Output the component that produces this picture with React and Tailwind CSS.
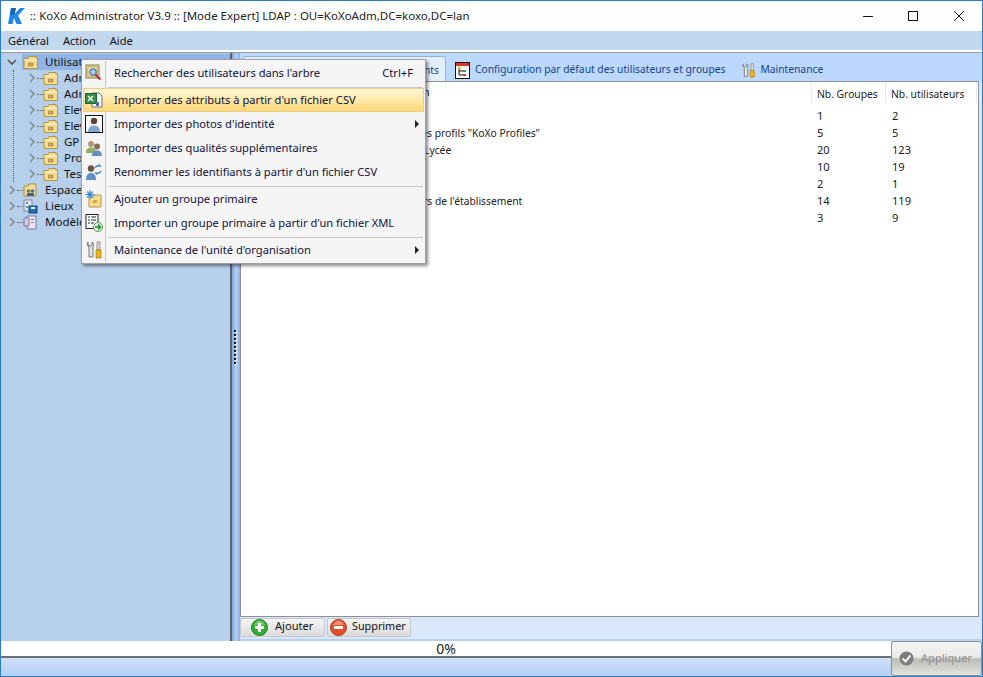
import React from "react";

const FONT = "font-['Noto_Sans',sans-serif]";

function Logo() {
  return (
    <svg width="17" height="18" viewBox="0 0 17 18" className="shrink-0">
      <path d="M3 1h5L6.5 7 12 1h5l-7 7.5L14 17H8.5L6 11l-1.5 6H0z" fill="#1e8ae6" />
      <path d="M3 1h5L6.5 7 5 8H2z" fill="#1566b8" />
    </svg>
  );
}

function Chevron({ open }) {
  return open ? (
    <svg width="10" height="10" viewBox="0 0 10 10" className="shrink-0">
      <path d="M1 3l4 4 4-4" fill="none" stroke="#555" strokeWidth="1.6" />
    </svg>
  ) : (
    <svg width="10" height="10" viewBox="0 0 10 10" className="shrink-0">
      <path d="M3 1l4 4-4 4" fill="none" stroke="#8a8f96" strokeWidth="1.6" />
    </svg>
  );
}

function Folder() {
  return (
    <svg width="15" height="15" viewBox="0 0 15 15" className="shrink-0">
      <path d="M1 3.500h4l1-2h7v1.500h1.500v10.500H1z" fill="#f7dc8f" stroke="#b39545" strokeWidth="1" />
      <rect x="1.500" y="4.500" width="12.500" height="1" fill="#fff4c8" />
      <rect x="5.500" y="8" width="4.500" height="3" fill="#c9a94a" stroke="#8f7a36" strokeWidth="0.500" />
    </svg>
  );
}

function TreeIcon({ kind }) {
  if (kind === "space")
    return (
      <svg width="15" height="15" viewBox="0 0 15 15" className="shrink-0">
        <path d="M1 3h4l1-2h7v12H1z" fill="#f3dc98" stroke="#a89048" />
        <circle cx="5.500" cy="8" r="1.800" fill="#5f8f3e" />
        <circle cx="9.500" cy="8" r="1.800" fill="#3a6ea8" />
        <rect x="4" y="10" width="7" height="3" fill="#47608a" />
      </svg>
    );
  if (kind === "place")
    return (
      <svg width="15" height="15" viewBox="0 0 15 15" className="shrink-0">
        <rect x="1" y="1" width="8" height="11" fill="#dfe6f0" stroke="#7a8aa5" />
        <rect x="3" y="3" width="2" height="2" fill="#6c83ad" />
        <rect x="3" y="7" width="2" height="2" fill="#6c83ad" />
        <rect x="6" y="7" width="8" height="7" fill="#1f6fb5" stroke="#124a80" />
        <rect x="8" y="8" width="4" height="2" fill="#e8f0fa" />
      </svg>
    );
  return (
    <svg width="15" height="15" viewBox="0 0 15 15" className="shrink-0">
      <path d="M4 1h9v13H4z" fill="#e9e3f2" stroke="#8276a3" />
      <path d="M1 3h5v8H1z" fill="#d3c9e6" stroke="#8276a3" />
      <rect x="8" y="4" width="3" height="1" fill="#8276a3" />
      <rect x="8" y="7" width="3" height="1" fill="#8276a3" />
    </svg>
  );
}

const CHILDREN = ["Administratifs", "Admins", "Eleves", "Eleves2", "GP", "Profs", "Tests"];
const ROOTS = [
  { label: "Espaces", icon: "space" },
  { label: "Lieux", icon: "place" },
  { label: "Modèles", icon: "model" },
];

function TreeRow({ label, icon }) {
  return (
    <div className="flex h-4 items-center">
      <Chevron />
      <span className="w-[6px] border-t border-dotted border-[#666]" />
      {icon ? <TreeIcon kind={icon} /> : <Folder />}
      <span className={`whitespace-nowrap leading-4 ${icon ? "pl-[7px]" : "pl-[6px]"}`}>{label}</span>
    </div>
  );
}

function SearchIcon() {
  return (
    <svg width="18" height="18" viewBox="0 0 18 18">
      <rect x="1" y="1" width="13" height="13" fill="#e8d9a0" stroke="#8d7d45" />
      <rect x="3" y="3" width="9" height="9" fill="#f8f2d8" stroke="#b6a665" />
      <circle cx="8" cy="8" r="3.200" fill="#a9cdf0" stroke="#4d6f99" strokeWidth="1.200" />
      <path d="M10.500 10.500l5 5" stroke="#b0344a" strokeWidth="2.200" />
    </svg>
  );
}

function ExcelIcon() {
  return (
    <svg width="18" height="18" viewBox="0 0 18 18">
      <path d="M7 2h7l3 3v11H7z" fill="#fff" stroke="#5b6b7d" />
      <rect x="0.500" y="2.500" width="11" height="10" fill="#2f8f46" stroke="#1d6630" />
      <path d="M3 5l5 5M8 5l-5 5" stroke="#fff" strokeWidth="1.400" />
      <rect x="11" y="11" width="3" height="4" fill="#4b6ea8" />
    </svg>
  );
}

function PhotoIcon() {
  return (
    <svg width="18" height="18" viewBox="0 0 18 18">
      <rect x="0.500" y="0.500" width="17" height="17" fill="#fff" stroke="#111" />
      <circle cx="9" cy="6" r="3.200" fill="#5b4636" />
      <path d="M3 17c0-5 3-6.500 6-6.500s6 1.500 6 6.500z" fill="#7ea6d0" />
    </svg>
  );
}

function UsersIcon() {
  return (
    <svg width="18" height="18" viewBox="0 0 18 18">
      <circle cx="6" cy="5" r="3" fill="#b89870" />
      <path d="M1 14c0-4 2-5.500 5-5.500s5 1.500 5 5.500z" fill="#8bb05e" />
      <circle cx="12" cy="7.500" r="3" fill="#8d6c4c" />
      <path d="M7 17c0-4 2-5.500 5-5.500s5 1.500 5 5.500z" fill="#5f8fc4" />
    </svg>
  );
}

function RenameIcon() {
  return (
    <svg width="18" height="18" viewBox="0 0 18 18">
      <circle cx="6" cy="5.500" r="3.200" fill="#6d543e" />
      <path d="M1 17c0-5 2-7 5-7s5 2 5 7z" fill="#5f8fc4" />
      <path d="M10 5c1-2 3-2.500 5-2l-1-1.500M16 8c-1 2-3 2.500-5 2l1 1.500" fill="none" stroke="#3f86cf" strokeWidth="1.500" />
    </svg>
  );
}

function AddGroupIcon() {
  return (
    <svg width="18" height="18" viewBox="0 0 18 18">
      <path d="M4 7h4l1-2h7v12H4z" fill="#f7dc8f" stroke="#b39545" />
      <rect x="8" y="10" width="4" height="3" fill="#c9a94a" />
      <path d="M5 0v9M0.500 4.500h9M2 1.500l6 6M8 1.500l-6 6" stroke="#2f86e0" strokeWidth="1.100" />
    </svg>
  );
}

function ImportIcon() {
  return (
    <svg width="18" height="18" viewBox="0 0 18 18">
      <rect x="1" y="0.500" width="12" height="14" fill="#fff" stroke="#222" />
      <path d="M3 3h2M6 3h5M3 6h2M6 6h5M3 9h2M6 9h3" stroke="#222" strokeWidth="1" />
      <circle cx="13" cy="13" r="4.500" fill="#e9f6e6" stroke="#4c9a45" />
      <path d="M10 13h5M13 10.500l2.500 2.500-2.500 2.500" fill="none" stroke="#1d8a2e" strokeWidth="1.500" />
    </svg>
  );
}

function ToolsIcon({ size = 18 }) {
  return (
    <svg width={size} height={size} viewBox="0 0 18 18" className="shrink-0">
      <path d="M3 1v3l2 1 2-1V1c1.500 1 2 3 1 5v10H4V6C2 5 2 2 3 1z" fill="#e4e4e4" stroke="#777" />
      <rect x="12" y="1" width="3" height="8" fill="#d8d8d8" stroke="#777" strokeWidth="0.700" />
      <path d="M11 9h5v8h-5z" fill="#efb21e" stroke="#a87a10" strokeWidth="0.700" />
    </svg>
  );
}

function TreeTabIcon() {
  return (
    <svg width="16" height="17" viewBox="0 0 16 17" className="shrink-0">
      <rect x="0.500" y="0.500" width="14" height="16" fill="#fff" stroke="#111" />
      <rect x="1" y="1" width="13" height="3" fill="#d9362c" />
      <path d="M4 5v8h5M4 9h5" fill="none" stroke="#111" />
      <rect x="3" y="5" width="3" height="2" fill="#e8c13a" />
      <rect x="8" y="8" width="3" height="2" fill="#3aa04a" />
      <rect x="8" y="12" width="3" height="2" fill="#d9362c" />
    </svg>
  );
}

function RoundIcon({ color, edge, plus }) {
  return (
    <svg width="17" height="17" viewBox="0 0 17 17" className="shrink-0">
      <circle cx="8.500" cy="8.500" r="8" fill={color} stroke={edge} />
      <path d="M3 6c1-3 4-4.500 5.500-4.500S13 3 14 6z" fill="#fff" opacity="0.350" />
      {plus ? (
        <path d="M8.500 4v9M4 8.500h9" stroke="#fff" strokeWidth="3" />
      ) : (
        <path d="M4 8.500h9" stroke="#fff" strokeWidth="3" />
      )}
    </svg>
  );
}

const MENU = [
  { label: "Rechercher des utilisateurs dans l'arbre", icon: <SearchIcon />, shortcut: "Ctrl+F" },
  { sep: true },
  { label: "Importer des attributs à partir d'un fichier CSV", icon: <ExcelIcon />, active: true },
  { label: "Importer des photos d'identité", icon: <PhotoIcon />, arrow: true },
  { label: "Importer des qualités supplémentaires", icon: <UsersIcon /> },
  { label: "Renommer les identifiants à partir d'un fichier CSV", icon: <RenameIcon /> },
  { sep: true },
  { label: "Ajouter un groupe primaire", icon: <AddGroupIcon /> },
  { label: "Importer un groupe primaire à partir d'un fichier XML", icon: <ImportIcon /> },
  { sep: true },
  { label: "Maintenance de l'unité d'organisation", icon: <ToolsIcon />, arrow: true },
];

function ContextMenu() {
  return (
    <div className="absolute left-[80px] top-[58px] w-[345px] border border-[#a0a0a0] bg-[#f5f5f5] py-[1px] text-[11.150px] shadow-[2px_2px_3px_rgba(0,0,0,0.45)]">
      <div className="absolute bottom-[1px] left-[23px] top-[1px] w-[1px] bg-[#c5c5c5]" />
      {MENU.map((item, i) =>
        item.sep ? (
          <div key={i} className="ml-[26px] mr-[2px] h-[3px] border-b border-[#c5c5c5]" />
        ) : (
          <div
            key={i}
            className={`relative flex h-6 items-center ${
              item.active
                ? "mx-[1px] border border-[#e8d08c] bg-gradient-to-b from-[#fff6d8] via-[#ffe9a8] to-[#ffd777]"
                : ""
            }`}
          >
            <span className={`flex w-[24px] shrink-0 justify-center ${item.active ? "-ml-[2px]" : ""}`}>{item.icon}</span>
            <span className="ml-[8px] whitespace-nowrap text-[#10103a]">{item.label}</span>
            {item.shortcut && <span className="absolute right-[12px] text-[#10103a]">{item.shortcut}</span>}
            {item.arrow && <span className="absolute right-[6px] h-0 w-0 border-y-[4px] border-l-[4px] border-y-transparent border-l-[#222]" />}
          </div>
        )
      )}
    </div>
  );
}

const ROWS = [
  ["", "1", "2"],
  ['Groupe des profils "KoXo Profiles"', "5", "5"],
  ["Elèves du Lycée", "20", "123"],
  ["", "10", "19"],
  ["", "2", "1"],
  ["Formateurs de l'établissement", "14", "119"],
  ["", "3", "9"],
];

export default function App() {
  return (
    <div className={`${FONT} relative flex h-[677px] w-[983px] flex-col overflow-hidden border border-[#2b7cc4] bg-white text-[11.100px] text-[#10103a]`}>
      {/* title bar */}
      <div className="flex h-[30px] shrink-0 items-center bg-white pl-[7px]">
        <Logo />
        <span className="ml-[5px] whitespace-nowrap text-[11.500px] text-[#222]">:: KoXo Administrator V3.9 :: [Mode Expert] LDAP : OU=KoXoAdm,DC=koxo,DC=lan</span>
        <div className="ml-auto flex items-center pr-[18px]">
          <span className="h-[1px] w-[10px] bg-[#111]" />
          <span className="ml-[35px] h-[10px] w-[10px] border border-[#111]" />
          <svg width="10" height="10" viewBox="0 0 10 10" className="ml-[36px]">
            <path d="M0 0l10 10M10 0L0 10" stroke="#111" strokeWidth="1" />
          </svg>
        </div>
      </div>

      {/* menu bar */}
      <div className="flex h-[19px] shrink-0 items-center bg-[#c2d8ef] pl-[7px] pt-[1px] text-[#111]">
        <span>Général</span>
        <span className="ml-[14px]">Action</span>
        <span className="ml-[14px]">Aide</span>
      </div>
      <div className="h-[3px] shrink-0 border-b border-[#9a9a9a] bg-white" />

      {/* main */}
      <div className="flex min-h-0 flex-1">
        <div className="w-[231px] shrink-0 overflow-hidden border-r-2 border-[#5f6368] bg-[#b6cfea] pl-[6px] pt-[1px] text-[11.500px] text-[#111]">
          <div className="ml-[15px] flex h-4 items-center bg-[#8fb6e6]">
            <span className="-ml-[15px]">
              <Chevron open />
            </span>
            <span className="ml-[6px]">
              <Folder />
            </span>
            <span className="whitespace-nowrap pl-[7px]">Utilisateurs</span>
          </div>
          <div className="ml-[6px] border-l border-dotted border-[#555] pl-[13px]">
            {CHILDREN.map((label) => (
              <TreeRow key={label} label={label} />
            ))}
          </div>
          {ROOTS.map((row) => (
            <TreeRow key={row.label} label={row.label} icon={row.icon} />
          ))}
        </div>

        {/* splitter */}
        <div className="flex w-[8px] shrink-0 flex-col items-center justify-center gap-[2px] bg-gradient-to-r from-[#7ea6de] via-[#b4d0f4] to-[#8cb0e4] pr-[3px]">
          {Array.from({ length: 9 }).map((_, i) => (
            <span key={i} className="h-[2px] w-[2px] bg-[#111] shadow-[1px_1px_0_#fff]" />
          ))}
        </div>

        <div className="flex min-w-0 flex-1 flex-col border-b-2 border-[#b6cfee] bg-[#d9e8fb]">
          {/* tabs */}
          <div className="flex h-[28px] shrink-0 items-end bg-[#bcd8fc] pl-[3px] text-[10.280px] text-[#15428b]">
            <div className="flex h-[25px] w-[203px] items-center justify-end rounded-t-[3px] border border-b-0 border-[#8db2e3] bg-[#e3effd] pr-[6px] pt-[3px]">
              Paramètres courants
            </div>
            <div className="ml-[9px] flex h-[25px] items-center gap-[4px] pt-[3px]">
              <TreeTabIcon />
              <span className="whitespace-nowrap">Configuration par défaut des utilisateurs et groupes</span>
            </div>
            <div className="ml-[16px] flex h-[25px] items-center gap-[4px] pt-[3px]">
              <ToolsIcon size={15} />
              <span>Maintenance</span>
            </div>
          </div>

          {/* list */}
          <div className="mr-[3px] flex min-h-0 flex-1 flex-col border border-[#8b9098] bg-white text-[#222]">
            <div className="flex h-[21px] shrink-0 items-center text-[10.300px]">
              <span className="w-[570px] pl-[129px] text-[11.100px]">Description</span>
              <span className="h-full w-[75px] whitespace-nowrap border-x border-[#e9e9e9] pl-[5px] leading-[24px]">Nb. Groupes</span>
              <span className="h-full w-[91px] whitespace-nowrap border-r border-[#e9e9e9] pl-[5px] leading-[24px]">Nb. utilisateurs</span>
            </div>
            <div className="pt-[5px]">
              {ROWS.map((r, i) => (
                <div key={i} className="flex h-[17px] items-center">
                  <span className="w-[570px] whitespace-nowrap pl-[135px] text-[10.300px]">{r[0]}</span>
                  <span className="w-[75px] pl-[6px]">{r[1]}</span>
                  <span className="pl-[6px]">{r[2]}</span>
                </div>
              ))}
            </div>
          </div>

          {/* add / remove */}
          <div className="flex h-[22px] shrink-0 items-start gap-[2px] pt-[1px] text-[#111]">
            <button className="flex h-[19px] w-[85px] items-center rounded-[2px] border border-[#c4c8cc] bg-gradient-to-b from-[#f5f5f5] to-[#dcdcdc] pl-[10px]">
              <RoundIcon color="#2fae2f" edge="#1f7f1f" plus />
              <span className="ml-[7px] -translate-y-[1px]">Ajouter</span>
            </button>
            <button className="flex h-[19px] w-[84px] items-center rounded-[2px] border border-[#c4c8cc] bg-gradient-to-b from-[#f5f5f5] to-[#dcdcdc] pl-[2px]">
              <RoundIcon color="#e4502a" edge="#b03a1c" />
              <span className="ml-[5px] -translate-y-[1px] text-[10.800px]">Supprimer</span>
            </button>
          </div>
        </div>
      </div>

      {/* bottom */}
      <div className="flex h-[35px] shrink-0 bg-[#c6dcf8]">
        <div className="flex flex-1 flex-col">
          <div className="flex h-[17px] items-center justify-center border-b-2 border-[#6b7077] bg-white text-[14px] text-[#222]">0%</div>
          <div className="flex-1 bg-gradient-to-b from-[#cfe0fa] to-[#b4d1f5]" />
        </div>
        <div className="flex w-[91px] items-center rounded-[3px] border border-[#8d8d8d] bg-[linear-gradient(#f2f2f2_0%,#ececec_45%,#bdbdb8_52%,#e2e2de_100%)] pl-[7px] text-[#8e8e8e]">
          <svg width="15" height="15" viewBox="0 0 15 15" className="shrink-0">
            <circle cx="7.500" cy="7.500" r="7" fill="#7d7d7d" />
            <path d="M3.500 7.500l3 3 5-6" fill="none" stroke="#f2f2f2" strokeWidth="2" />
          </svg>
          <span className="ml-[7px]">Appliquer</span>
        </div>
      </div>

      <ContextMenu />
    </div>
  );
}
